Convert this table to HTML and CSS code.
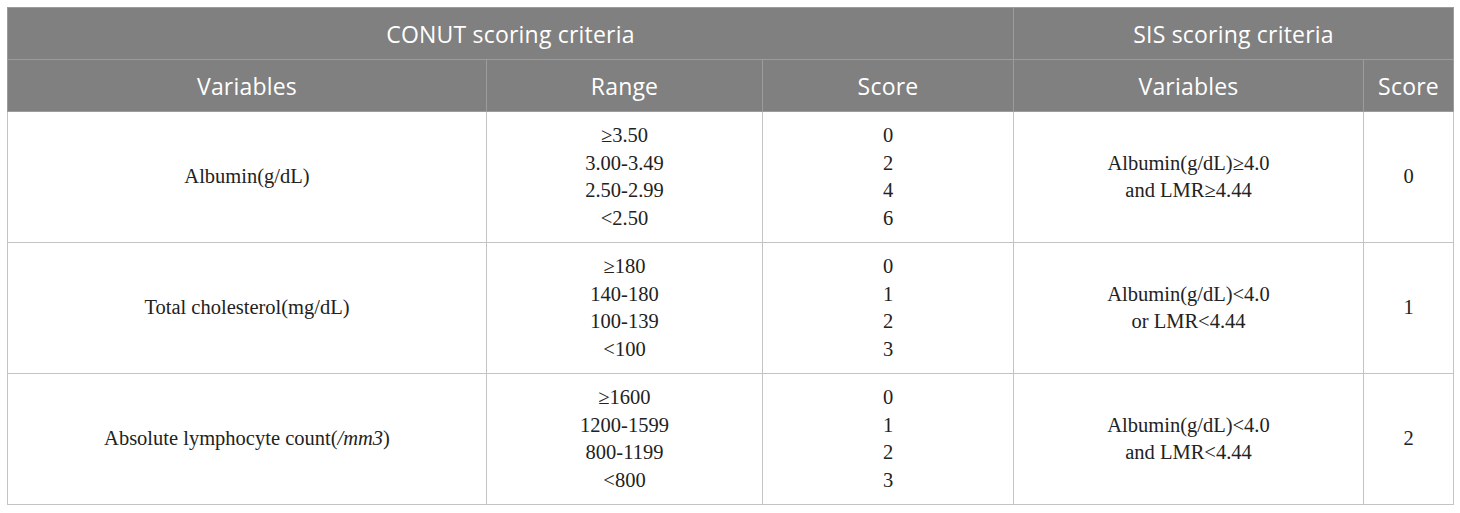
FILE: index.html
```html
<!DOCTYPE html>
<html>
<head>
<meta charset="utf-8">
<link rel="stylesheet" href="styles.css">
</head>
<body>
<table class="criteria">
  <colgroup>
    <col class="c1"><col class="c2"><col class="c3"><col class="c4"><col class="c5">
  </colgroup>
  <thead>
    <tr class="hrow">
      <th colspan="3">CONUT scoring criteria</th>
      <th colspan="2">SIS scoring criteria</th>
    </tr>
    <tr class="hrow">
      <th>Variables</th>
      <th>Range</th>
      <th>Score</th>
      <th>Variables</th>
      <th>Score</th>
    </tr>
  </thead>
  <tbody>
    <tr class="brow">
      <td>Albumin(g/dL)</td>
      <td>≥3.50<br>3.00-3.49<br>2.50-2.99<br>&lt;2.50</td>
      <td>0<br>2<br>4<br>6</td>
      <td>Albumin(g/dL)≥4.0<br>and LMR≥4.44</td>
      <td>0</td>
    </tr>
    <tr class="brow">
      <td>Total cholesterol(mg/dL)</td>
      <td>≥180<br>140-180<br>100-139<br>&lt;100</td>
      <td>0<br>1<br>2<br>3</td>
      <td>Albumin(g/dL)&lt;4.0<br>or LMR&lt;4.44</td>
      <td>1</td>
    </tr>
    <tr class="brow">
      <td>Absolute lymphocyte count(<i>/mm3</i>)</td>
      <td>≥1600<br>1200-1599<br>800-1199<br>&lt;800</td>
      <td>0<br>1<br>2<br>3</td>
      <td>Albumin(g/dL)&lt;4.0<br>and LMR&lt;4.44</td>
      <td>2</td>
    </tr>
  </tbody>
</table>
</body>
</html>
```
FILE: styles.css
```css
html, body {
  margin: 0;
  background: #ffffff;
}
body {
  padding: 7px;
}
.criteria {
  border-collapse: collapse;
  table-layout: fixed;
  width: 1446px;
  border: 1px solid #c4c4c4;
}
.c1 { width: 479px; }
.c2 { width: 276px; }
.c3 { width: 251px; }
.c4 { width: 350px; }
.c5 { width: 90px; }
.hrow th {
  height: 51px;
  padding: 0;
  background: #808080;
  color: #ffffff;
  font-family: "Open Sans", "Noto Sans", sans-serif;
  font-weight: normal;
  font-size: 23px;
  letter-spacing: 0.2px;
  text-align: center;
  vertical-align: middle;
  border: 1px solid #9c9c9c;
}
.brow td {
  height: 130px;
  padding: 0;
  font-family: "Liberation Serif", "Times New Roman", serif;
  font-size: 20.5px;
  line-height: 27.5px;
  color: #222222;
  text-align: center;
  vertical-align: middle;
  border: 1px solid #c4c4c4;
}
.brow i {
  font-style: italic;
}
```
